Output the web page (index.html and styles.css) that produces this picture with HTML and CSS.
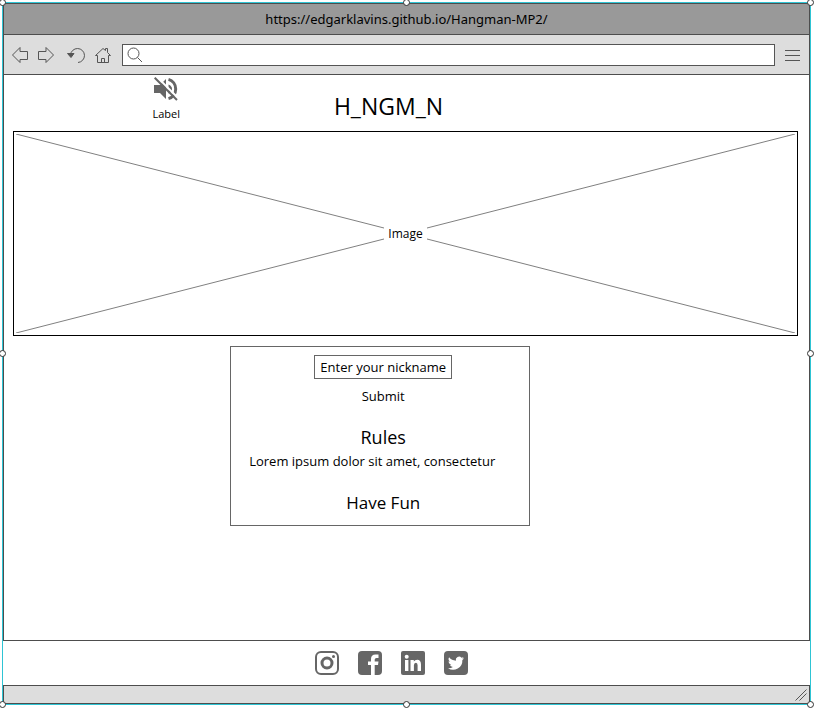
FILE: index.html
```html
<!DOCTYPE html>
<html lang="en">
<head>
<meta charset="utf-8">
<meta name="viewport" content="width=device-width, initial-scale=1">
<title>H_NGM_N</title>
<link rel="stylesheet" href="styles.css">
</head>
<body>
<div class="frame">
  <div class="titlebar">https://edgarklavins.github.io/Hangman-MP2/</div>
  <div class="toolbar">
    <button class="tool" type="button" aria-label="Back">
      <svg viewBox="0 0 18 18"><path d="M1.500 9 9 1.500V5.500H16.500V13.500H9V16.500Z"/></svg>
    </button>
    <button class="tool" type="button" aria-label="Forward">
      <svg viewBox="0 0 18 18"><path d="M16.500 9 9 1.500V5.500H1.500V13.500H9V16.500Z"/></svg>
    </button>
    <button class="tool tool-reload" type="button" aria-label="Reload">
      <svg viewBox="0 0 18 18"><path d="M3.500 9A7 7 0 1 1 11 16.500"/><path class="solid" d="M.5 7.500H7L4 11.500Z"/></svg>
    </button>
    <button class="tool tool-home" type="button" aria-label="Home">
      <svg viewBox="0 0 18 18"><path d="M1.500 9.500 9 2.500 11.500 4.500V2.500H13.500V6.500L16.500 9.500M1.500 9.500H3.500V16.500H14.500V9.500H16.500M7.500 16.500V12.500H10.500V16.500"/></svg>
    </button>
    <label class="address">
      <svg viewBox="0 0 18 18"><circle cx="7.500" cy="7.500" r="5.500"/><path d="M11.500 11.500 16 16"/></svg>
      <input type="text" aria-label="Address">
    </label>
    <button class="tool tool-menu" type="button" aria-label="Menu">
      <svg viewBox="0 0 18 18"><path d="M1 4.500H16M1 9.500H16M1 14.500H16"/></svg>
    </button>
  </div>

  <main class="page">
    <header class="header">
      <button class="sound" type="button">
        <svg viewBox="0 0 24 24">
          <path d="M0 8H6L12 2V22L6 16H0Z"/>
          <path d="M14.500 7.500Q18 9 18 12T14.500 16.500Z"/>
          <path class="wave" d="M14.500 2.400A10 10 0 0 1 14.500 21.600"/>
          <path class="slash-gap" d="M2-1 25 22"/>
          <path class="slash" d="M.7.700 23 23"/>
        </svg>
        <span>Label</span>
      </button>
      <h1>H_NGM_N</h1>
    </header>

    <div class="image">
      <svg viewBox="0 0 100 100" preserveAspectRatio="none"><path d="M0 0 100 100M0 100 100 0"/></svg>
      <span>Image</span>
    </div>

    <section class="panel">
      <form class="form">
        <input type="text" aria-label="Nickname" placeholder="Enter your nickname">
        <button type="button">Submit</button>
      </form>
      <h2>Rules</h2>
      <p class="rules">Lorem ipsum dolor sit amet, consectetur</p>
      <p class="fun">Have Fun</p>
    </section>
  </main>

  <footer class="footer">
    <a href="#" aria-label="Instagram">
      <svg viewBox="0 0 24 24"><rect class="line" x="1" y="1" width="22" height="22" rx="5"/><circle class="line thick" cx="12" cy="12" r="5"/><circle cx="18.500" cy="5.500" r="1.500"/></svg>
    </a>
    <a href="#" aria-label="Facebook">
      <svg viewBox="0 0 24 24"><rect width="24" height="24" rx="4"/><path class="cut" d="M13 24V14H10V10.500H13V8Q13 3.500 17.500 3.500H20.500V7H18.500Q16.700 7 16.700 8.600V10.500H20.500L20 14H16.700V24Z"/></svg>
    </a>
    <a href="#" aria-label="LinkedIn">
      <svg viewBox="0 0 24 24"><rect width="24" height="24" rx="2"/><circle class="cut" cx="5.700" cy="5.700" r="2"/><path class="cut" d="M4 9H7.400V20H4ZM9.500 9H12.800V10.500Q14 8.700 16.200 8.700 20 8.700 20 13.500V20H16.600V14.300Q16.600 11.700 14.900 11.700 12.900 11.700 12.900 14.300V20H9.500Z"/></svg>
    </a>
    <a href="#" aria-label="Twitter">
      <svg viewBox="0 0 24 24"><rect width="24" height="24" rx="4"/><path class="cut" d="M20 7.200a6.600 6.600 0 0 1-1.900.5 3.300 3.300 0 0 0 1.450-1.800 6.600 6.600 0 0 1-2.100.8 3.300 3.300 0 0 0-5.600 3A9.300 9.300 0 0 1 5.100 6.300a3.300 3.300 0 0 0 1 4.400 3.300 3.300 0 0 1-1.500-.4 3.300 3.300 0 0 0 2.650 3.250 3.300 3.300 0 0 1-1.500.05 3.300 3.300 0 0 0 3.080 2.280A6.600 6.600 0 0 1 4 17.200 9.300 9.300 0 0 0 18.360 8.900 6.600 6.600 0 0 0 20 7.200Z"/></svg>
    </a>
  </footer>

  <div class="statusbar">
    <svg viewBox="0 0 12 12"><path d="M.5 11.500 11.500.5M4.500 11.500 11.500 4.500"/></svg>
  </div>

  <i class="handle top left"></i>
  <i class="handle top center"></i>
  <i class="handle top right"></i>
  <i class="handle middle left"></i>
  <i class="handle middle right"></i>
  <i class="handle bottom left"></i>
  <i class="handle bottom center"></i>
  <i class="handle bottom right"></i>
</div>
</body>
</html>
```
FILE: styles.css
```css
* { box-sizing: border-box; }

body {
  margin: 0;
  padding: 2px 6px 7px 2px;
  background: #fff;
  color: #000;
  font: 13px/20px "Open Sans", "Noto Sans", sans-serif;
  overflow-x: hidden;
}

h1, h2, p { margin: 0; font-weight: 400; }
svg { display: block; }

button, input {
  padding: 0;
  border: 0;
  background: none;
  color: inherit;
  font: inherit;
}

.frame {
  position: relative;
  display: flex;
  flex-direction: column;
  min-height: calc(100vh - 9px);
  border: 1px solid #2ec4d4;
}

.titlebar {
  height: 32px;
  border: 1px solid #4d4d4d;
  background: #999;
  font-family: "Noto Sans", "Open Sans", sans-serif;
  line-height: 30px;
  text-align: center;
}

.toolbar {
  display: flex;
  align-items: center;
  height: 40px;
  padding: 0 7px;
  border: 1px solid #4d4d4d;
  border-top: 0;
  background: #ddd;
}

.toolbar svg {
  width: 18px;
  height: 18px;
  fill: none;
  stroke: #555;
}

.toolbar .solid { fill: #555; }
.tool { margin-right: 8px; }
.tool-reload { margin: 0 9px 0 4px; }
.tool-home { margin-right: 10px; }
.tool-menu { margin: 0 0 0 9px; }

.address {
  display: flex;
  flex: 1;
  align-items: center;
  height: 22px;
  padding-left: 3px;
  border: 1px solid #555;
  background: #fff;
}

.address input { flex: 1; min-width: 0; }

.page {
  flex: 1;
  border: 1px solid #4d4d4d;
  border-top: 0;
}

.header {
  display: grid;
  grid-template-columns: 27fr 10fr 30fr;
  height: 56px;
}

.sound {
  display: flex;
  flex-direction: column;
  align-items: center;
  justify-self: center;
  padding-top: 2px;
  font-size: 11px;
  line-height: 26px;
}

.sound svg { width: 24px; height: 24px; fill: #666; }
.sound .wave, .slash, .slash-gap { fill: none; stroke: #666; stroke-width: 3; }
.sound .slash { stroke-width: 2; }
.sound .slash-gap { stroke: #fff; stroke-width: 2; }

h1 {
  font-size: 23px;
  line-height: 62px;
  text-align: center;
  white-space: nowrap;
}

.image {
  display: grid;
  place-items: center;
  height: 205px;
  margin: 0 11px 0 9px;
  padding: 2px;
  border: 1px solid #000;
}

.image svg, .image span { grid-area: 1 / 1; }
.image svg { width: 100%; height: 199px; }
.image path { stroke: #808080; vector-effect: non-scaling-stroke; }

.image span {
  padding: 0 4px;
  background: #fff;
  font-size: 12px;
}

.panel {
  width: 300px;
  margin: 10px 0 20px 28.1%;
  padding: 8px 0 10px 6px;
  border: 1px solid #666;
  text-align: center;
}

.form {
  display: flex;
  flex-direction: column;
  align-items: center;
  gap: 7px;
}

.form input {
  width: 138px;
  height: 24px;
  border: 1px solid #666;
  text-align: center;
}

.form input::placeholder { color: #000; opacity: 1; }

h2 {
  margin-top: 17px;
  font-size: 18px;
  line-height: 28px;
}

.rules { padding-left: 12px; text-align: left; white-space: nowrap; }
.fun { margin-top: 20px; font-size: 17px; line-height: 24px; }

.footer {
  display: flex;
  align-items: center;
  justify-content: center;
  gap: 19px;
  height: 44px;
  padding-right: 30px;
}

.footer svg { width: 24px; height: 24px; fill: #666; }
.footer .line { fill: none; stroke: #666; stroke-width: 2; }
.footer .thick { stroke-width: 3; }
.footer .cut { fill: #fff; }

.statusbar {
  display: flex;
  align-items: center;
  justify-content: flex-end;
  height: 19px;
  padding: 0 2px;
  border: 1px solid #4d4d4d;
  background: #ddd;
}

.statusbar svg { width: 12px; height: 12px; stroke: #555; }

.handle {
  position: absolute;
  width: 7px;
  height: 7px;
  border: 1px solid #333;
  border-radius: 50%;
  background: #fff;
}

.top { top: -4px; }
.middle { top: calc(50% - 4px); }
.bottom { bottom: -4px; }
.left { left: -4px; }
.center { left: calc(50% - 4px); }
.right { right: -4px; }
```
